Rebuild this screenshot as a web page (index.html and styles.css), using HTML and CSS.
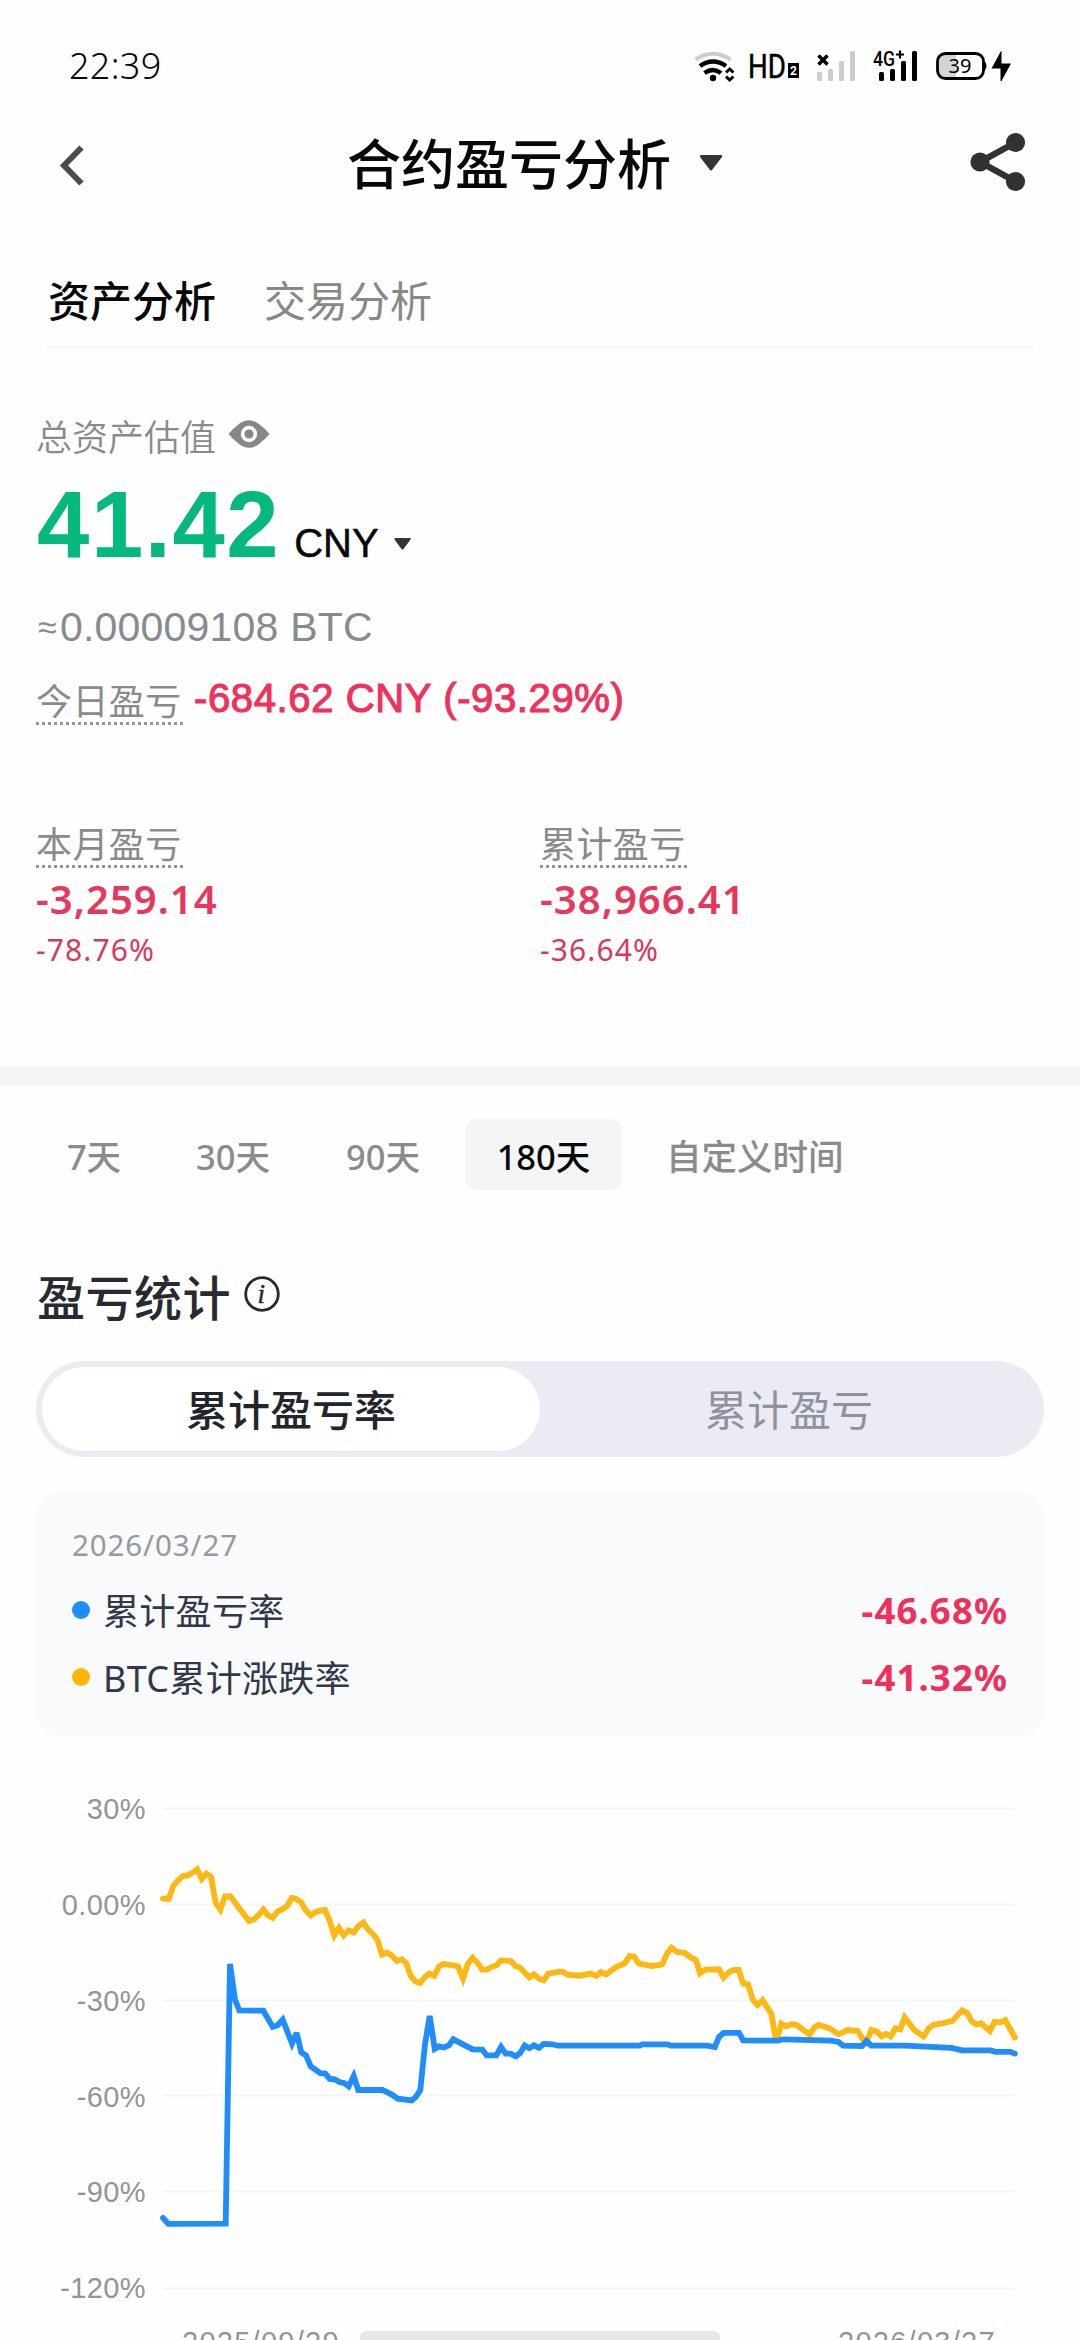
FILE: index.html
```html
<!DOCTYPE html>
<html lang="zh-CN">
<head>
<meta charset="utf-8">
<title>合约盈亏分析</title>
<link rel="stylesheet" href="styles.css">
</head>
<body>
<div class="screen">
  <header class="status">
    <span class="clock">22:39</span>
    <svg class="status-icons" width="340" height="50" viewBox="690 40 340 50">
      <g fill="none" stroke-linecap="butt">
        <path d="M695.500 59.500Q713 48 730.500 59.500" stroke="#ccc" stroke-width="4"/>
        <path d="M700 66Q713 57 726 66" stroke="#000" stroke-width="4.500"/>
        <path d="M704.500 73Q713 67 721 73" stroke="#000" stroke-width="4.500"/>
        <path d="M726 72.500L729.700 69L733.400 72.500M726 76.500L729.700 80L733.400 76.500" stroke="#000" stroke-width="3"/>
      </g>
      <circle cx="713" cy="78" r="3.200"/>
      <text class="hd" x="748" y="78" textLength="38" lengthAdjust="spacingAndGlyphs">HD</text>
      <rect x="788" y="63" width="11" height="15"/>
      <text class="hd2" x="793.500" y="75" text-anchor="middle">2</text>
      <path d="M818.500 55.500l9 9m0-9l-9 9" stroke="#000" stroke-width="3.500"/>
      <g fill="#ccc">
        <rect x="817" y="72" width="5" height="9" rx="1.500"/><rect x="828" y="69" width="5" height="12" rx="1.500"/>
        <rect x="839" y="61" width="5" height="20" rx="1.500"/><rect x="850" y="51" width="5" height="30" rx="1.500"/>
      </g>
      <text class="net" x="873" y="65.500" textLength="22" lengthAdjust="spacingAndGlyphs">4G</text>
      <path d="M900 50.500v8m-4-4h8" stroke="#000" stroke-width="2.200"/>
      <rect x="879" y="72" width="5" height="9" rx="1.500"/><rect x="890" y="69" width="5" height="12" rx="1.500"/>
      <rect x="901" y="61" width="5" height="20" rx="1.500"/><rect x="912" y="51" width="5" height="30" rx="1.500"/>
      <path d="M946 54H956V78H946Q938 78 938 70V62Q938 54 946 54Z" fill="#d4d4d4"/>
      <rect x="937.500" y="53.500" width="46" height="25" rx="8" fill="none" stroke="#000" stroke-width="2.800"/>
      <path d="M984 61q2.500 1.500 2.500 5t-2.500 5z"/>
      <text class="batt" x="960" y="73" text-anchor="middle">39</text>
      <path d="M1001 51L991.500 68.500H1000.500V81H1001.500L1011 63.500H1001.500V51Z"/>
    </svg>
  </header>

  <nav class="titlebar">
    <svg class="back" width="30" height="46" viewBox="0 0 30 46"><path d="M26.500 5.500L9 23.500L26.500 41.500" fill="none" stroke="#494b50" stroke-width="6"/></svg>
    <div class="title"><span>合约盈亏分析</span>
      <svg width="24" height="16" viewBox="0 0 24 16"><path d="M2 0H22Q24 .5 23 2L13 15Q12 16 11 15L1 2Q0 .5 2 0Z" fill="#33353a"/></svg>
    </div>
    <svg class="share" width="56" height="60" viewBox="0 0 56 60"><path d="M45.500 10.500L10 30L45.500 49.500" fill="none" stroke="#303236" stroke-width="6.500"/><g fill="#303236"><circle cx="45.500" cy="10.500" r="9.600"/><circle cx="10" cy="30" r="9.600"/><circle cx="45.500" cy="49.500" r="9.600"/></g></svg>
  </nav>

  <div class="tabs"><span class="on">资产分析</span><span>交易分析</span></div>

  <section class="assets">
    <div class="label total">总资产估值
      <svg width="42" height="28" viewBox="0 0 42 28"><path d="M.5 14Q5 8.500 11 4Q21-3.500 31 4Q37 8.500 41.500 14Q37 19.500 31 24Q21 31.500 11 24Q5 19.500 .5 14Z" fill="#858889"/><circle cx="21" cy="14" r="6.400" fill="none" stroke="#fefefe" stroke-width="3.600"/></svg>
    </div>
    <div class="balance"><strong>41.42</strong><span>CNY</span>
      <svg width="17" height="12" viewBox="0 0 17 12"><path d="M1 0H16Q17 .5 16.500 1.500L9.500 11Q8.500 12 7.500 11L.5 1.500Q0 .5 1 0Z" fill="#333"/></svg>
    </div>
    <div class="btc"><span class="approx">≈</span>0.00009108 BTC</div>
    <div class="today"><span class="label dotted">今日盈亏</span><span class="today-value">-684.62 CNY (-93.29%)</span></div>
    <div class="totals">
      <div><span class="label dotted">本月盈亏</span><b>-3,259.14</b><small>-78.76%</small></div>
      <div><span class="label dotted">累计盈亏</span><b>-38,966.41</b><small>-36.64%</small></div>
    </div>
  </section>

  <div class="band"></div>

  <div class="ranges"><span class="r7">7天</span><span class="r30">30天</span><span class="r90">90天</span><span class="active">180天</span><span class="custom">自定义时间</span></div>

  <h2 class="heading">盈亏统计
    <svg width="38" height="38" viewBox="0 0 38 38"><circle cx="19" cy="19" r="16.300" fill="none" stroke="#27292e" stroke-width="2.800"/><text class="info-i" x="18.500" y="28" text-anchor="middle">i</text></svg>
  </h2>

  <div class="segment"><span class="on">累计盈亏率</span><span>累计盈亏</span></div>

  <div class="card">
    <div class="date">2026/03/27</div>
    <div class="legend"><i class="dot blue"></i><span>累计盈亏率</span><b>-46.68%</b></div>
    <div class="legend second"><i class="dot gold"></i><span>BTC累计涨跌率</span><b>-41.32%</b></div>
  </div>

  <svg class="chart" width="1080" height="604" viewBox="0 -44 1080 604">
    <path class="grid" d="M163 28.500H1015M163 124.500H1015M163 220.500H1015M163 315.500H1015M163 411.500H1015M163 508.500H1015"/>
    <g class="axis" text-anchor="end">
      <text x="146" y="39">30%</text><text x="146" y="135">0.00%</text><text x="146" y="231">-30%</text>
      <text x="146" y="327">-60%</text><text x="146" y="422">-90%</text><text x="146" y="518">-120%</text>
    </g>
    <polyline class="line gold-line" points="163,118.600 168.700,119 173.300,106 178,100.400 182.700,96 187.700,95.400 192.300,92.900 197.300,89.300 201.700,98.900 206.300,93.600 211,96.800 215.700,123.200 220.300,129.600 225,116.400 230,116 249,141.100 254,139.300 258.700,135 263.300,129.600 268,135.400 272.700,137.900 277.300,131.800 282.700,128.900 287.300,126 291.700,117.900 296.300,118.900 301.300,122.500 305.700,130 310.700,135.400 315.700,132 320.300,130.700 325,130 329.700,141 334.300,155.400 339,147.900 343.700,155.400 348.700,150.400 353.700,152.500 358.300,146 363.300,142.500 368,149.300 373.700,155 377.300,159.600 382,174.600 387.300,172.500 392,175.700 396.700,181 401.700,179.300 406,182.900 410.700,195.700 415.300,201.400 420.300,202.900 425,196.800 429.300,193.600 434.300,195.700 439,186.400 443.700,183.900 453.300,185.400 458,186.400 463,198.600 467.700,183.900 472.700,177.900 477.300,182.500 482,189.600 487,189.600 491.700,186.800 496.300,185.400 501,180.400 511,181 515.700,186.400 520,187.500 529.300,197.500 534,194.300 539.300,199 543.700,200.400 548.300,193.600 558,191.800 562.400,191.400 567.500,194.600 579.600,195.700 590.600,193.600 596.500,196 601,192 606,194.300 616.400,186.800 624.400,183.600 629.500,176 634,176.400 638.800,183.600 652,186 662.200,184.300 667.400,172.900 671.500,167.900 676.400,171.800 684.600,172.900 691.500,177.900 696,180 700,193.200 705.300,189.600 719,189.300 723.500,197.500 728.700,192.500 733.500,190 738.700,190 743.200,203.600 748,204.300 752.800,219.600 757.300,225 762.500,220 771.400,233.900 776.200,262 781.400,243.600 786.200,246.400 791.400,244.300 796.200,244.600 809.600,254.600 814.500,247.500 818.600,245 829.300,248.200 838.600,254.300 847.900,250 857.800,251 862,257.900 866.400,262.500 871.300,250 876.800,251.400 881.600,256.400 886,253.900 890.600,256.400 895.400,248.200 900.200,249.300 904.700,237.500 914.300,250 923.600,256.400 928.800,248.200 933.300,245 942.900,243.200 952.500,241 962.200,230.400 967.300,233.200 971.500,241 976.300,244.600 981,243.200 990,251 994.500,241.800 1000,242.500 1005.200,240 1014.900,257.500"/>
    <polyline class="line blue-line" points="163,437.900 168.300,443.900 225.700,443.600 230,184 235,219.600 239.300,230.400 263.300,230.700 272.700,246.800 277.300,245.400 282.700,239.600 292,263.600 296.700,252.900 301.300,272.500 306,275.400 310.700,286.400 320.300,293.200 325.300,293.600 329.700,298.900 334.700,299.300 339.300,302 344,302.900 348.700,306.400 353.700,296 358.300,310 382.300,310 392,314.600 397.700,318.600 411.700,320.400 415.700,317 420.300,310 425,264.300 429.700,236 434.700,268.900 439,266.400 444,267.500 448.700,265.400 453.300,259.300 472.700,269.300 482.300,269.600 486.700,275.400 496.300,275.400 501,267 505.700,273.600 510.700,273.600 515.700,276.400 520,273.200 524.700,265.400 529.300,268.200 534,265.400 539,267.900 543.700,263.900 552.700,264.300 558,265.700 639.900,265.700 642.300,264.300 667.400,264.300 670.900,265.700 707,265.700 714.900,267 719,257 723.500,252.900 739,252.900 743.200,260.400 777.600,260.700 783,259.300 831,260.700 838.600,262 843,265.700 862,266 866.400,261 871.300,265.700 905,265.700 951.500,267.900 962.200,270.400 990.400,270.400 995.600,271.800 1010.400,271.800 1014.900,273.600"/>
    <g class="axis"><text x="182" y="572" textLength="157">2025/09/29</text><text x="838" y="572" textLength="157">2026/03/27</text></g>
    <rect x="360" y="551" width="360" height="14" rx="6" fill="#e7e7e7"/>
  </svg>
</div>
</body>
</html>
```

FILE: styles.css
```css
* { box-sizing: border-box; }
body { margin: 0; background: #fefefe; }
.screen { width: 1080px; height: 2340px; overflow: hidden; display: flex; flex-direction: column; background: #fefefe; color: #060809; font-family: "Noto Sans", "Noto Sans CJK SC", sans-serif; }
.screen > * { flex-shrink: 0; }
svg { display: block; }

.status { height: 120px; display: flex; justify-content: space-between; align-items: flex-start; padding: 40px 50px 0 69px; }
.clock { font-size: 36px; line-height: 52px; font-weight: 350; letter-spacing: .3px; }
.hd { font: 400 34px Roboto, sans-serif; stroke: #000; stroke-width: .5px; }
.hd2 { font: 700 12px Roboto, sans-serif; fill: #fff; }
.net { font: 500 21px Roboto, sans-serif; }
.batt { font: 400 20px "Noto Sans", sans-serif; }

.titlebar { height: 122px; display: flex; align-items: flex-start; justify-content: space-between; padding: 0 54px 0 55px; }
.back { margin-top: 22px; }
.title { display: flex; align-items: center; height: 84px; gap: 28px; margin-left: 15px; font: 500 54px/84px "Noto Sans CJK SC", sans-serif; }
.title svg { margin-top: 2px; }
.share { margin-top: 12px; }

.tabs { height: 106px; margin: 0 47px; display: flex; gap: 48px; padding: 26px 0 0 1px; border-bottom: 2px solid #f6f6f7; font: 400 42px/62px "Noto Sans CJK SC", sans-serif; color: #868889; }
.tabs .on { color: #060809; font-weight: 500; }

.assets { height: 719px; padding: 61px 36px 0; display: flex; flex-direction: column; }
.label { font: 400 36px/52px "Noto Sans CJK SC", sans-serif; color: #888b8e; }
.total { display: flex; gap: 12px; align-items: center; height: 52px; font-weight: 350; }
.total svg { margin-top: -2px; }
.balance { display: flex; align-items: baseline; height: 123px; padding: 1px 0 0 1px; font-family: "Liberation Sans", sans-serif; }
.balance strong { font-size: 94px; line-height: 126px; color: #05b87d; letter-spacing: 1.600px; }
.balance span { font-size: 40px; margin-left: 14px; -webkit-text-stroke: .5px; }
.balance svg { margin-left: 15px; align-self: flex-start; margin-top: 76px; }
.btc { display: flex; align-items: center; font: 41px/60px "Liberation Sans", sans-serif; letter-spacing: .2px; color: #888b8e; height: 60px; margin-top: 13px; padding-left: 2px; }
.approx { font-size: 34px; width: 22px; overflow: visible; }
.today { display: flex; height: 76px; align-items: center; gap: 11px; margin-top: 3px; }
.today-value { font: 40px/56px "Liberation Sans", sans-serif; letter-spacing: .63px; color: #ee325b; -webkit-text-stroke: 1.100px; }
.dotted { width: 147px; letter-spacing: .4px; background: repeating-linear-gradient(90deg, #94979a 0 3px, transparent 3px 6px) 0 100% / 100% 3px no-repeat; }
.today .dotted { position: relative; top: 1px; }
.totals { display: grid; grid-template-columns: 504px 504px; margin-top: 80px; }
.totals > div { display: flex; flex-direction: column; }
.totals b { font-weight: 600; font-size: 40px; line-height: 56px; margin-top: 3px; letter-spacing: 1.050px; color: #e8365c; }
.totals small { font-size: 30px; line-height: 46px; color: #d9385d; letter-spacing: 1.100px; }

.band { height: 18px; background: #f4f4f5; }

.ranges { height: 137px; padding: 34px 0 0 37px; display: flex; font: 500 34.500px/75px "Noto Sans", "Noto Sans CJK SC", sans-serif; color: #898b8c; }
.ranges span { height: 71px; text-align: center; white-space: nowrap; }
.ranges .r7 { width: 114px; }
.ranges .r30 { width: 164px; }
.ranges .r90 { width: 136px; }
.ranges .active { width: 157px; margin-left: 14px; background: #f4f5f7; border-radius: 10px; color: #08090a; }
.ranges .custom { margin-left: 44px; font-size: 35.500px; }

.heading { margin: 0; height: 139px; padding: 37px 0 0 37px; display: flex; gap: 12px; align-items: flex-start; font: 500 48px/72px "Noto Sans CJK SC", sans-serif; letter-spacing: .5px; color: #272a30; }
.heading svg { margin-top: 16px; }
.info-i { font: italic 27px "Liberation Serif", serif; fill: #27292e; stroke: #27292e; stroke-width: .5px; }

.segment { width: 1008px; height: 96px; margin: 0 36px; padding: 6px; border-radius: 48px; background: #ebecf3; display: grid; grid-template-columns: 1fr 1fr; font: 400 42px/82px "Noto Sans CJK SC", sans-serif; color: #8f929d; text-align: center; }
.segment .on { background: #fff; border-radius: 42px; color: #22252b; font-weight: 500; height: 84px; }

.card { width: 1008px; height: 244px; margin: 35px 36px 0; padding: 31px 36px 0; border-radius: 24px; background: #f8fafc; }
.date { font-size: 29.500px; line-height: 44px; letter-spacing: .9px; color: #97999b; }
.legend { display: flex; align-items: center; height: 67px; margin-top: 9px; color: #30384a; }
.legend.second { margin-top: 0; }
.legend span { font: 400 36px/56px "Noto Sans", "Noto Sans CJK SC", sans-serif; margin: 4px 0 0 13px; letter-spacing: .3px; }
.legend b { margin-left: auto; font-size: 36.500px; font-weight: 700; letter-spacing: 1.150px; color: #f0305a; }
.dot { width: 18px; height: 18px; border-radius: 50%; }
.blue { background: #1e8ffa; }
.gold { background: #ffb607; }

.axis { font: 29px "Liberation Sans", sans-serif; letter-spacing: .4px; fill: #929597; }
.grid { stroke: #f4f4f4; stroke-width: 1.500; fill: none; }
.line { fill: none; stroke-width: 5.800; stroke-linecap: round; stroke-linejoin: miter; stroke-miterlimit: 3; }
.gold-line { stroke: #fdb813; }
.blue-line { stroke: #1f8dfb; }
```
